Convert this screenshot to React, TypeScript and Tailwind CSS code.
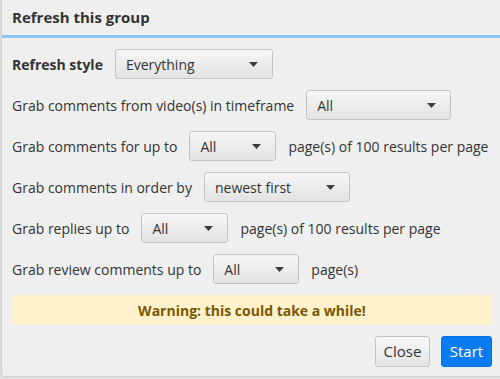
import React from 'react';

const Caret = () => (
    <svg width="9" height="5" viewBox="0 0 9 5" className="shrink-0">
        <path d="M0 0 L9 0 L4.5 5 Z" fill="#3c3c3c" />
    </svg>
);

const Select = ({ value, width }: { value: string; width: string }) => (
    <div className={`${width} h-[30px] shrink-0 flex items-center justify-between pl-[10px] pr-[14px] rounded-[3px] border border-[#c4c4c4] bg-gradient-to-b from-[#f6f6f6] to-[#e3e3e3] text-[#333]`}>
        <span>{value}</span>
        <Caret />
    </div>
);

const Row = ({ children }: { children: React.ReactNode }) => (
    <div className="flex items-center h-[30px] gap-[12px]">{children}</div>
);

export default function App() {
    return (
        <div className="w-[500px] h-[379px] bg-[#dedede] overflow-hidden" style={{ fontFamily: '"Open Sans", "Noto Sans", sans-serif' }}>
            <div className="ml-[1px] w-[499px] h-[377px] bg-[#efefef] border-l border-b border-[#cfcfcf] rounded-bl-[4px] flex flex-col text-[14px] text-[#333]">
                <div className="h-[35px] flex items-center pl-[10px] font-bold text-[15px] text-[#333]">
                    Refresh this group
                </div>
                <div className="h-[3px] bg-[#90c4f8]" />
                <div className="flex flex-col gap-[11px] pl-[10px] pr-[8px] pt-[11px]">
                    <Row>
                        <span className="font-bold">Refresh style</span>
                        <Select value="Everything" width="w-[158px]" />
                    </Row>
                    <Row>
                        <span>Grab comments from video(s) in timeframe</span>
                        <Select value="All" width="w-[145px]" />
                    </Row>
                    <Row>
                        <span>Grab comments for up to</span>
                        <Select value="All" width="w-[87px]" />
                        <span>page(s) of 100 results per page</span>
                    </Row>
                    <Row>
                        <span>Grab comments in order by</span>
                        <Select value="newest first" width="w-[146px]" />
                    </Row>
                    <Row>
                        <span>Grab replies up to</span>
                        <Select value="All" width="w-[87px]" />
                        <span>page(s) of 100 results per page</span>
                    </Row>
                    <Row>
                        <span>Grab review comments up to</span>
                        <Select value="All" width="w-[86px]" />
                        <span>page(s)</span>
                    </Row>
                    <div className="h-[30px] flex items-center justify-center rounded-[4px] bg-[#fff2cc] text-[#7a5800] font-bold">
                        Warning: this could take a while!
                    </div>
                    <div className="flex justify-end gap-[11px]">
                        <button className="h-[31px] w-[55px] rounded-[3px] border border-[#c4c4c4] bg-gradient-to-b from-[#f8f8f8] to-[#e4e4e4] text-[#333] text-[15px]">
                            Close
                        </button>
                        <button className="h-[31px] w-[51px] rounded-[3px] border border-[#0b6fdc] bg-[#0a7cf2] text-white text-[15px]">
                            Start
                        </button>
                    </div>
                </div>
            </div>
        </div>
    );
}
